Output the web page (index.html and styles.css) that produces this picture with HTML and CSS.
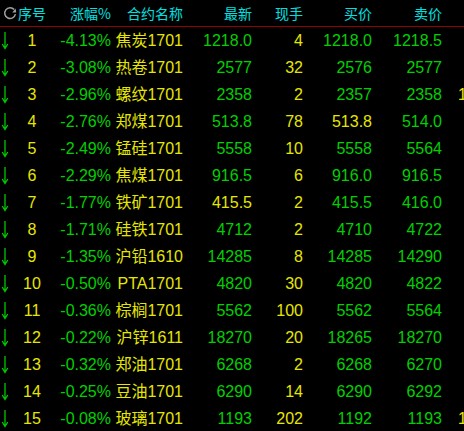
FILE: index.html
```html
<!DOCTYPE html>
<html lang="zh">
<head>
<meta charset="utf-8">
<title>行情</title>
<link rel="stylesheet" href="styles.css">
</head>
<body>
<div class="board">
  <div class="row head">
    <div class="c icon"><svg width="14" height="14" viewBox="0 0 14 14"><path d="M11.2 3.6 A5.4 5.4 0 1 0 12.4 8.2" fill="none" stroke="#a0a0a0" stroke-width="1.5"/><path d="M9.2 6.4 L13.2 6.6 L12.6 2.4 Z" fill="#a0a0a0"/></svg></div>
    <div class="c ctr">序号</div>
    <div class="c">涨幅%</div>
    <div class="c">合约名称</div>
    <div class="c">最新</div>
    <div class="c">现手</div>
    <div class="c">买价</div>
    <div class="c">卖价</div>
    <div class="c more">卖量</div>
  </div>

  <div class="row"><div class="c arrow"><svg width="10" height="18" viewBox="0 0 10 18"><path d="M5 0 V16 M2.2 12 L5 16.5 L7.8 12" fill="none" stroke="#00c800" stroke-width="1.3"/></svg></div><div class="c ctr y">1</div><div class="c g">-4.13%</div><div class="c y">焦炭1701</div><div class="c g">1218.0</div><div class="c y">4</div><div class="c g">1218.0</div><div class="c g">1218.5</div><div class="c more y"></div></div>
  <div class="row"><div class="c arrow"><svg width="10" height="18" viewBox="0 0 10 18"><path d="M5 0 V16 M2.2 12 L5 16.5 L7.8 12" fill="none" stroke="#00c800" stroke-width="1.3"/></svg></div><div class="c ctr y">2</div><div class="c g">-3.08%</div><div class="c y">热卷1701</div><div class="c g">2577</div><div class="c y">32</div><div class="c g">2576</div><div class="c g">2577</div><div class="c more y"></div></div>
  <div class="row"><div class="c arrow"><svg width="10" height="18" viewBox="0 0 10 18"><path d="M5 0 V16 M2.2 12 L5 16.5 L7.8 12" fill="none" stroke="#00c800" stroke-width="1.3"/></svg></div><div class="c ctr y">3</div><div class="c g">-2.96%</div><div class="c y">螺纹1701</div><div class="c g">2358</div><div class="c y">2</div><div class="c g">2357</div><div class="c g">2358</div><div class="c more y">1562</div></div>
  <div class="row"><div class="c arrow"><svg width="10" height="18" viewBox="0 0 10 18"><path d="M5 0 V16 M2.2 12 L5 16.5 L7.8 12" fill="none" stroke="#00c800" stroke-width="1.3"/></svg></div><div class="c ctr y">4</div><div class="c g">-2.76%</div><div class="c y">郑煤1701</div><div class="c g">513.8</div><div class="c y">78</div><div class="c y">513.8</div><div class="c g">514.0</div><div class="c more y"></div></div>
  <div class="row"><div class="c arrow"><svg width="10" height="18" viewBox="0 0 10 18"><path d="M5 0 V16 M2.2 12 L5 16.5 L7.8 12" fill="none" stroke="#00c800" stroke-width="1.3"/></svg></div><div class="c ctr y">5</div><div class="c g">-2.49%</div><div class="c y">锰硅1701</div><div class="c g">5558</div><div class="c y">10</div><div class="c g">5558</div><div class="c g">5564</div><div class="c more y"></div></div>
  <div class="row"><div class="c arrow"><svg width="10" height="18" viewBox="0 0 10 18"><path d="M5 0 V16 M2.2 12 L5 16.5 L7.8 12" fill="none" stroke="#00c800" stroke-width="1.3"/></svg></div><div class="c ctr y">6</div><div class="c g">-2.29%</div><div class="c y">焦煤1701</div><div class="c g">916.5</div><div class="c y">6</div><div class="c g">916.0</div><div class="c g">916.5</div><div class="c more y"></div></div>
  <div class="row"><div class="c arrow"><svg width="10" height="18" viewBox="0 0 10 18"><path d="M5 0 V16 M2.2 12 L5 16.5 L7.8 12" fill="none" stroke="#00c800" stroke-width="1.3"/></svg></div><div class="c ctr y">7</div><div class="c g">-1.77%</div><div class="c y">铁矿1701</div><div class="c y">415.5</div><div class="c y">2</div><div class="c g">415.5</div><div class="c g">416.0</div><div class="c more y"></div></div>
  <div class="row"><div class="c arrow"><svg width="10" height="18" viewBox="0 0 10 18"><path d="M5 0 V16 M2.2 12 L5 16.5 L7.8 12" fill="none" stroke="#00c800" stroke-width="1.3"/></svg></div><div class="c ctr y">8</div><div class="c g">-1.71%</div><div class="c y">硅铁1701</div><div class="c g">4712</div><div class="c y">2</div><div class="c g">4710</div><div class="c g">4722</div><div class="c more y"></div></div>
  <div class="row"><div class="c arrow"><svg width="10" height="18" viewBox="0 0 10 18"><path d="M5 0 V16 M2.2 12 L5 16.5 L7.8 12" fill="none" stroke="#00c800" stroke-width="1.3"/></svg></div><div class="c ctr y">9</div><div class="c g">-1.35%</div><div class="c y">沪铅1610</div><div class="c g">14285</div><div class="c y">8</div><div class="c g">14285</div><div class="c g">14290</div><div class="c more y"></div></div>
  <div class="row"><div class="c arrow"><svg width="10" height="18" viewBox="0 0 10 18"><path d="M5 0 V16 M2.2 12 L5 16.5 L7.8 12" fill="none" stroke="#00c800" stroke-width="1.3"/></svg></div><div class="c ctr y">10</div><div class="c g">-0.50%</div><div class="c y">PTA1701</div><div class="c g">4820</div><div class="c y">30</div><div class="c g">4820</div><div class="c g">4822</div><div class="c more y"></div></div>
  <div class="row"><div class="c arrow"><svg width="10" height="18" viewBox="0 0 10 18"><path d="M5 0 V16 M2.2 12 L5 16.5 L7.8 12" fill="none" stroke="#00c800" stroke-width="1.3"/></svg></div><div class="c ctr y">11</div><div class="c g">-0.36%</div><div class="c y">棕榈1701</div><div class="c g">5562</div><div class="c y">100</div><div class="c g">5562</div><div class="c g">5564</div><div class="c more y"></div></div>
  <div class="row"><div class="c arrow"><svg width="10" height="18" viewBox="0 0 10 18"><path d="M5 0 V16 M2.2 12 L5 16.5 L7.8 12" fill="none" stroke="#00c800" stroke-width="1.3"/></svg></div><div class="c ctr y">12</div><div class="c g">-0.22%</div><div class="c y">沪锌1611</div><div class="c g">18270</div><div class="c y">20</div><div class="c g">18265</div><div class="c g">18270</div><div class="c more y"></div></div>
  <div class="row"><div class="c arrow"><svg width="10" height="18" viewBox="0 0 10 18"><path d="M5 0 V16 M2.2 12 L5 16.5 L7.8 12" fill="none" stroke="#00c800" stroke-width="1.3"/></svg></div><div class="c ctr y">13</div><div class="c g">-0.32%</div><div class="c y">郑油1701</div><div class="c g">6268</div><div class="c y">2</div><div class="c g">6268</div><div class="c g">6270</div><div class="c more y"></div></div>
  <div class="row"><div class="c arrow"><svg width="10" height="18" viewBox="0 0 10 18"><path d="M5 0 V16 M2.2 12 L5 16.5 L7.8 12" fill="none" stroke="#00c800" stroke-width="1.3"/></svg></div><div class="c ctr y">14</div><div class="c g">-0.25%</div><div class="c y">豆油1701</div><div class="c g">6290</div><div class="c y">14</div><div class="c g">6290</div><div class="c g">6292</div><div class="c more y"></div></div>
  <div class="row"><div class="c arrow"><svg width="10" height="18" viewBox="0 0 10 18"><path d="M5 0 V16 M2.2 12 L5 16.5 L7.8 12" fill="none" stroke="#00c800" stroke-width="1.3"/></svg></div><div class="c ctr y">15</div><div class="c g">-0.08%</div><div class="c y">玻璃1701</div><div class="c g">1193</div><div class="c y">202</div><div class="c g">1192</div><div class="c g">1193</div><div class="c more y">1350</div></div>
</div>
</body>
</html>
```

FILE: styles.css
```css
html, body {
  margin: 0;
  padding: 0;
  background: #000;
}

.board {
  width: 464px;
  height: 431px;
  overflow: hidden;
  background: #000;
  font-family: "Liberation Sans", "Noto Sans CJK SC", sans-serif;
  font-size: 16px;
}

.row {
  display: grid;
  grid-template-columns: 12px 40px 59px 72px 69px 51px 69px 70px 80px;
  height: 27px;
  align-items: center;
  white-space: nowrap;
}

.row.head {
  height: 26px;
  border-bottom: 1px solid #900000;
  color: #00e0e0;
  font-family: "Noto Sans CJK SC", sans-serif;
  font-size: 14px;
}

.c {
  text-align: right;
  line-height: 27px;
  overflow: visible;
}

.head .c {
  line-height: 26px;
}

.c.ctr {
  text-align: center;
}

.c.more {
  text-align: left;
  padding-left: 16px;
}

.head .c.more {
  visibility: hidden;
}

.c.icon,
.c.arrow {
  display: flex;
  align-items: center;
  justify-content: flex-start;
}

.c.icon {
  padding-left: 3px;
  height: 26px;
}

.c.icon svg {
  display: block;
  flex: none;
}

.c.arrow {
  height: 27px;
  padding-left: 0;
}

.c.arrow svg {
  display: block;
  flex: none;
}

.g {
  color: #00d000;
}

.y {
  color: #e6e600;
}
```
